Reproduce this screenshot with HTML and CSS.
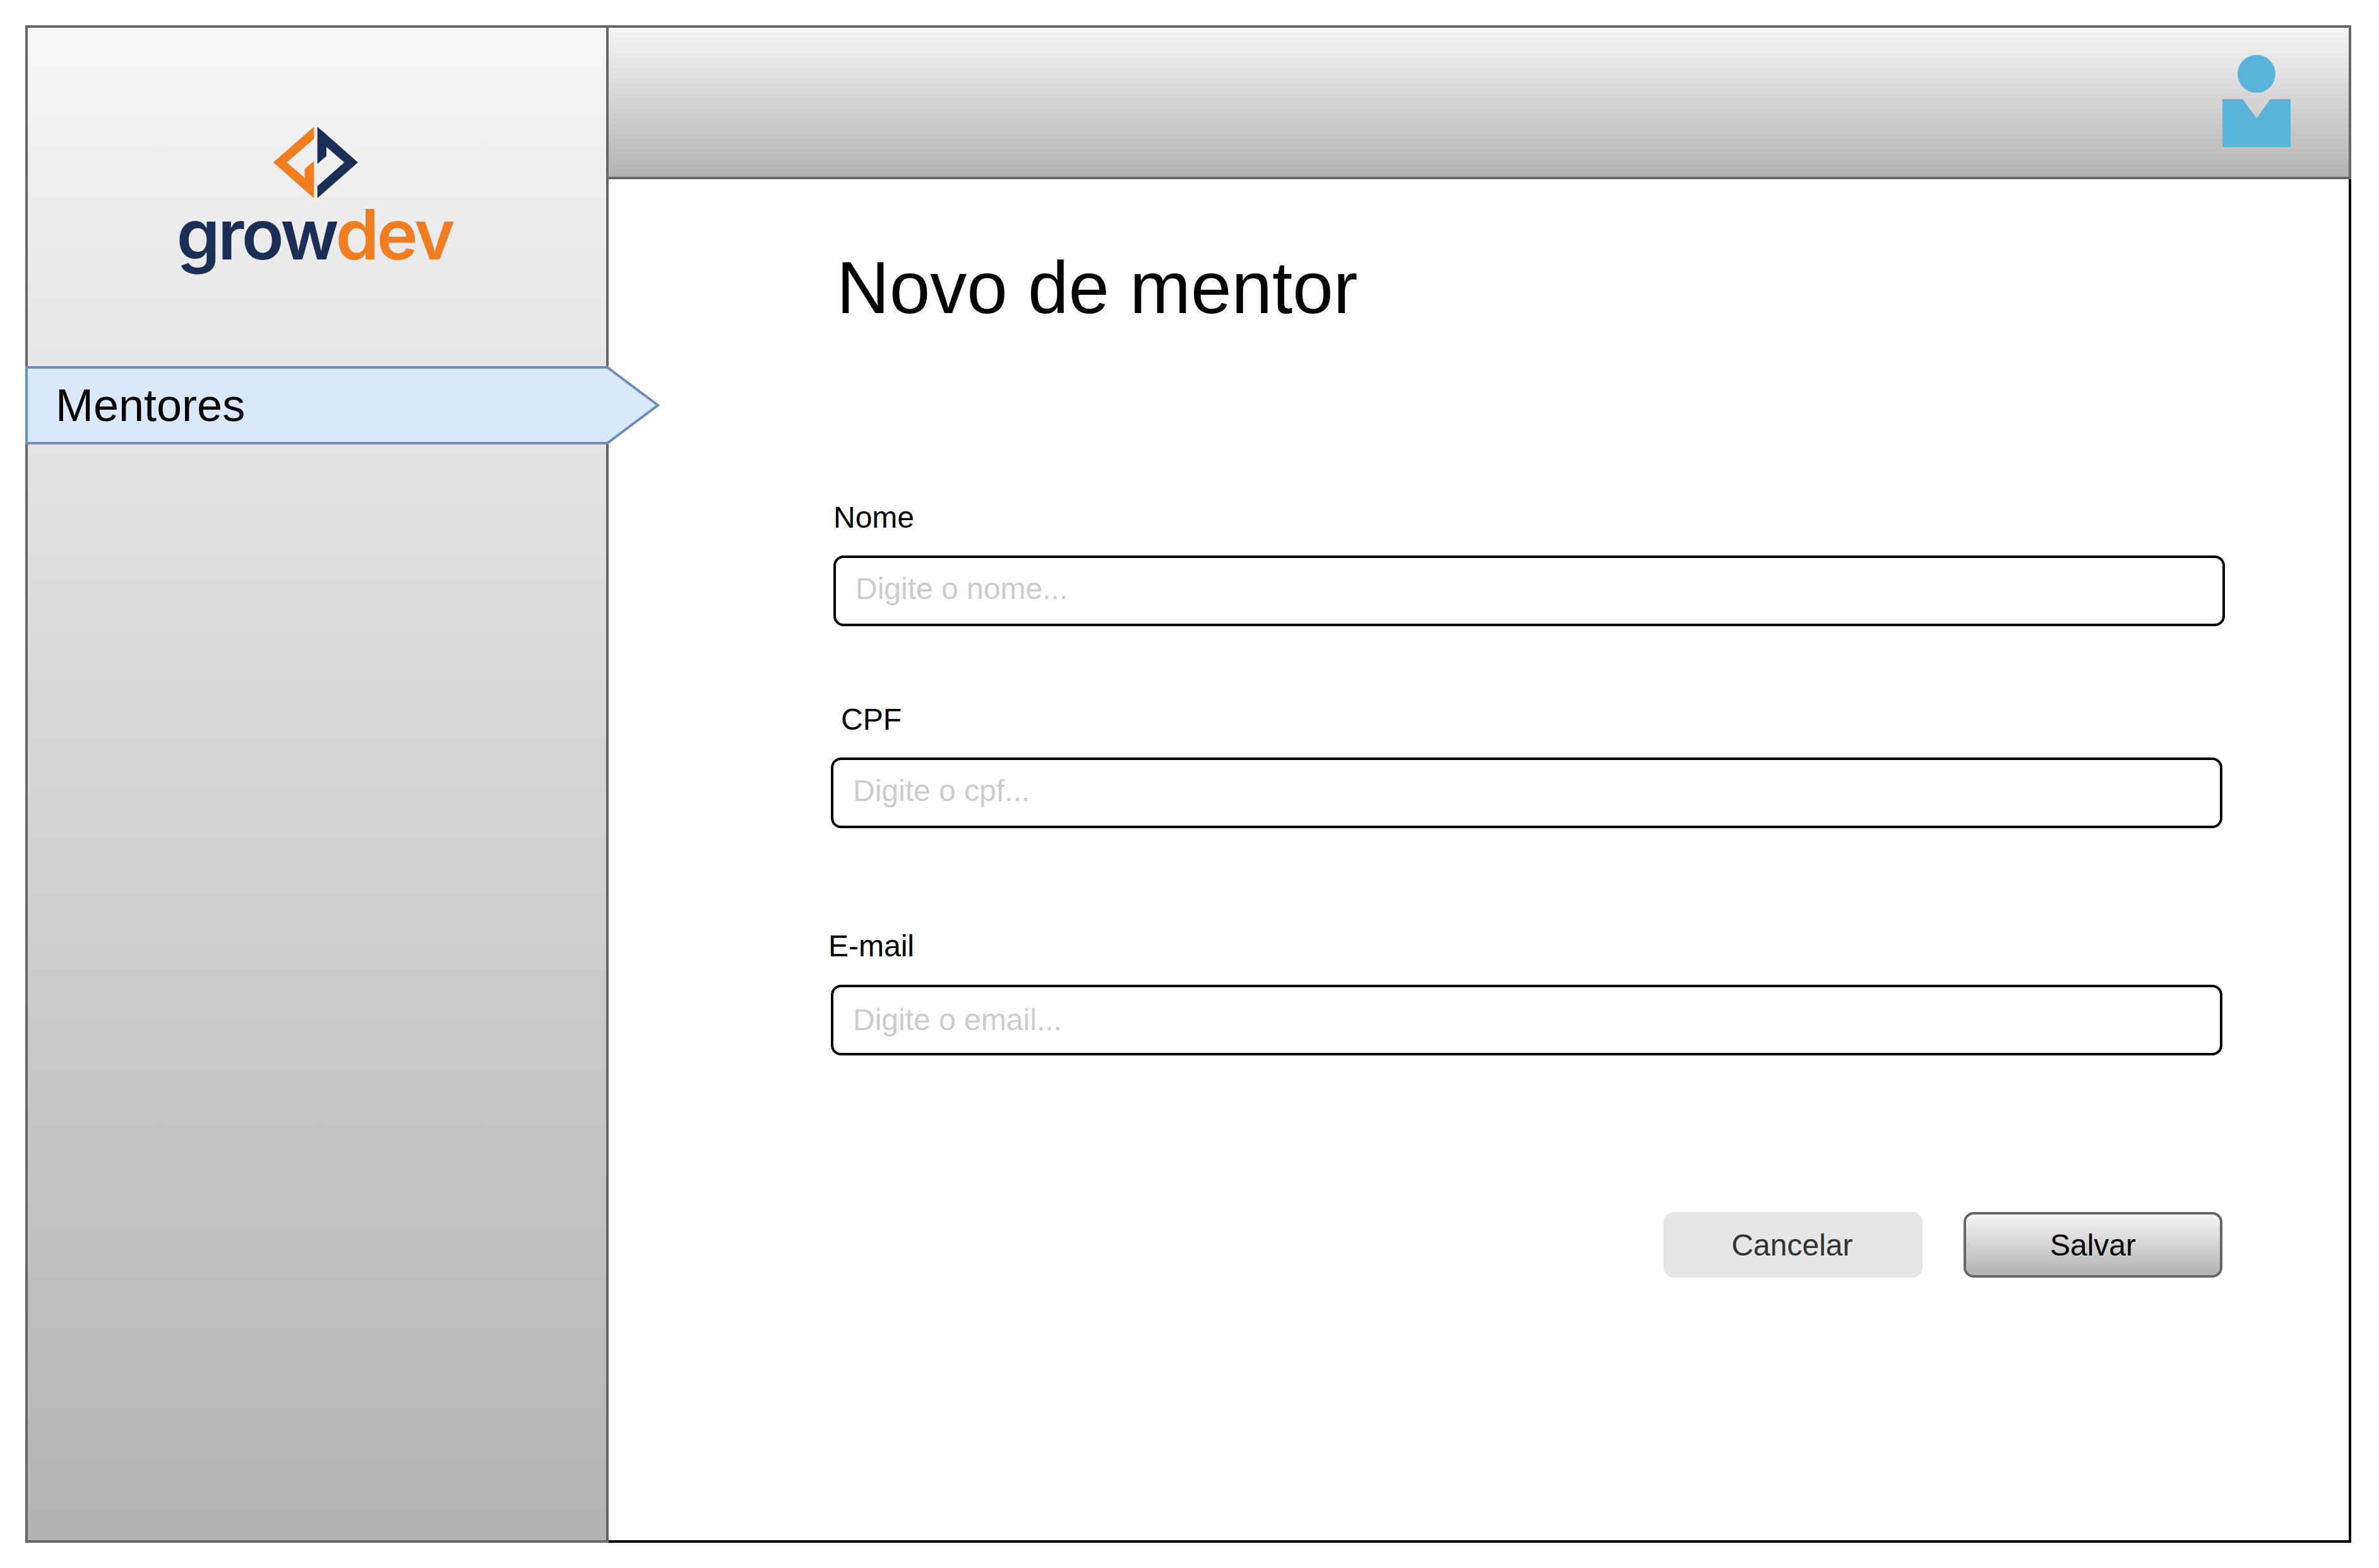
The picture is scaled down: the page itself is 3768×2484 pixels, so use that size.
FILE: index.html
```html
<!DOCTYPE html>
<html lang="pt-BR">
<head>
  <meta charset="UTF-8" />
  <title>Novo de mentor</title>
  <link rel="stylesheet" href="styles.css">
</head>
<body>

<div class="app">
  <aside class="sidebar">
    <div class="logo">
      <svg class="logo-mark" viewBox="576 90 408 344" aria-hidden="true">
        <polygon fill="#f07d20" points="772,92 772,150 643,262 728,336 728,292 772,255 772,432 578,262" />
        <polygon fill="#1b2f56" points="788,92 981,262 788,432 788,375 916,262 831,188 831,232 788,269" />
      </svg>
      <div class="logo-word">grow<span class="logo-dev">dev</span></div>
    </div>

    <a class="nav-item" href="#">
      <svg class="nav-shape" viewBox="0 0 1004 124" aria-hidden="true">
        <polygon points="2,2 922,2 1002,62 922,122 2,122" />
      </svg>
      <span class="nav-label">Mentores</span>
    </a>
  </aside>

  <div class="main">
    <header class="topbar">
      <svg class="avatar" viewBox="0 0 108 146" aria-hidden="true">
        <circle cx="54" cy="30" r="30" />
        <polygon points="0,70 32,70 54,100.500 76,70 108,70 108,146 0,146" />
      </svg>
    </header>

    <form class="content" autocomplete="off">
      <h1 class="title">Novo de mentor</h1>

      <div class="field field-nome">
        <label class="field-label" for="nome">Nome</label>
        <input class="field-input" type="text" id="nome" placeholder="Digite o nome..." />
      </div>

      <div class="field field-cpf">
        <label class="field-label" for="cpf">CPF</label>
        <input class="field-input" type="text" id="cpf" placeholder="Digite o cpf..." />
      </div>

      <div class="field field-email">
        <label class="field-label" for="email">E-mail</label>
        <input class="field-input" type="text" id="email" placeholder="Digite o email..." />
      </div>

      <div class="actions">
        <button type="button" class="btn btn-cancel">Cancelar</button>
        <button type="submit" class="btn btn-save">Salvar</button>
      </div>
    </form>
  </div>
</div>

</body>
</html>
```

FILE: styles.css
```css
body {
  margin: 0;
  padding: 40px;
  background: #fff;
  font-family: "Liberation Sans", Arial, sans-serif;
  color: #000;
}
.app {
  display: flex;
  width: 3684px;
  height: 2404px;
}
.sidebar {
  flex: none;
  width: 924px;
  box-sizing: border-box;
  border: 4px solid #666;
  background: linear-gradient(#f5f5f5, #b3b3b3);
}
.logo {
  height: 536px;
  box-sizing: border-box;
  padding-top: 156px;
  padding-right: 4px;
  display: flex;
  flex-direction: column;
  align-items: center;
}
.logo-mark {
  width: 136px;
  height: 114.67px;
  display: block;
}
.logo-word {
  margin-top: -9px;
  margin-right: 3px;
  font-family: Inter, sans-serif;
  font-size: 110px;
  line-height: 130px;
  font-weight: 600;
  letter-spacing: -3.500px;
  color: #1b2f56;
}
.logo-dev {
  color: #f07d20;
}
.nav-item {
  position: relative;
  z-index: 1;
  display: flex;
  align-items: center;
  width: 1004px;
  height: 124px;
  margin-left: -4px;
  box-sizing: border-box;
  padding-left: 48px;
  color: #000;
  text-decoration: none;
}
.nav-shape {
  position: absolute;
  left: 0;
  top: 0;
  width: 1004px;
  height: 124px;
  overflow: visible;
}
.nav-shape polygon {
  fill: #dae8fc;
  stroke: #6c8ebf;
  stroke-width: 4;
}
.nav-label {
  position: relative;
  font-size: 72px;
}
.main {
  flex: 1;
  display: flex;
  flex-direction: column;
  min-width: 0;
}
.topbar {
  height: 236px;
  box-sizing: content-box;
  border-top: 4px solid #666;
  border-right: 4px solid #666;
  border-bottom: 4px solid #666;
  background: linear-gradient(#f5f5f5, #b3b3b3);
  display: flex;
  justify-content: flex-end;
  padding-right: 92px;
}
.avatar {
  width: 108px;
  height: 146px;
  margin-top: 43px;
  fill: #59b4d9;
}
.content {
  flex: 1;
  box-sizing: border-box;
  border-right: 4px solid #000;
  border-bottom: 4px solid #000;
  padding-left: 352px;
}
.title {
  margin: 0;
  padding-top: 106px;
  padding-left: 9px;
  font-size: 116px;
  line-height: 132px;
  font-weight: 400;
}
.field-label {
  display: block;
  font-size: 48px;
  line-height: 56px;
  margin-bottom: 33px;
}
.field-input {
  display: block;
  box-sizing: border-box;
  width: 2204px;
  height: 112px;
  padding: 0 31px 8px;
  border: 4px solid #000;
  border-radius: 16px;
  background: #fff;
  font-family: "Liberation Sans", Arial, sans-serif;
  font-size: 48px;
  outline: none;
}
.field-input::placeholder {
  color: #ccc;
  opacity: 1;
}
.field-nome {
  margin-top: 270px;
  margin-left: 4px;
}
.field-nome .field-label {
  margin-left: 0;
  margin-bottom: 32px;
}
.field-cpf {
  margin-top: 120px;
}
.field-cpf .field-label {
  margin-left: 16px;
  margin-bottom: 32px;
}
.field-email {
  margin-top: 159px;
}
.field-email .field-label {
  margin-left: -4px;
}
.field-email .field-input {
  padding-bottom: 2px;
}
.actions {
  display: flex;
  justify-content: flex-end;
  gap: 65px;
  width: 2204px;
  margin-top: 248px;
}
.btn {
  width: 410px;
  height: 104px;
  box-sizing: border-box;
  border-radius: 16px;
  font-family: "Liberation Sans", Arial, sans-serif;
  font-size: 48px;
  padding: 0;
  cursor: pointer;
}
.btn-cancel {
  border: none;
  padding-right: 3px;
  background: #e6e6e6;
  color: #333;
}
.btn-save {
  border: 4px solid #666;
  background: linear-gradient(#f5f5f5, #b3b3b3);
  color: #000;
}
```
